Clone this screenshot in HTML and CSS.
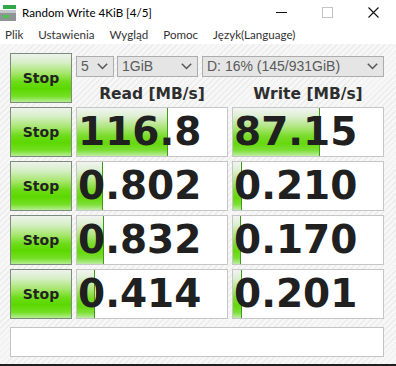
FILE: index.html
```html
<!DOCTYPE html>
<html>
<head>
<meta charset="utf-8">
<link rel="stylesheet" href="styles.css">
</head>
<body>
<div class="window">
  <div class="titlebar">
    <svg class="app-icon" width="17" height="16" viewBox="0 0 17 16">
      <rect x="3" y="0" width="13" height="4" fill="#2fa84a"/>
      <rect x="0" y="5" width="16" height="11" fill="#8f9497"/>
      <rect x="0" y="5" width="16" height="3" fill="#c3c7c9"/>
      <rect x="3" y="10" width="6" height="3" fill="#4fc24f"/>
    </svg>
    <span class="title">Random Write 4KiB [4/5]</span>
    <div class="controls-win">
      <span class="wbtn"><svg width="11" height="11" viewBox="0 0 11 11"><line x1="0" y1="5.5" x2="11" y2="5.5" stroke="#111" stroke-width="1"/></svg></span>
      <span class="wbtn"><svg width="11" height="11" viewBox="0 0 11 11"><rect x="0.5" y="0.5" width="10" height="10" fill="none" stroke="#c4c4c4" stroke-width="1"/></svg></span>
      <span class="wbtn"><svg width="11" height="11" viewBox="0 0 11 11"><path d="M0.5 0.5 L10.5 10.5 M10.5 0.5 L0.5 10.5" stroke="#111" stroke-width="1.1"/></svg></span>
    </div>
  </div>
  <div class="menubar">
    <span>Plik</span><span>Ustawienia</span><span>Wygląd</span><span>Pomoc</span><span>Język(Language)</span>
  </div>
  <div class="main">
    <div class="grid">
      <div class="stop">Stop</div>
      <div class="top-cell">
        <div class="selects">
          <div class="select s-count">5<svg class="chev" width="11" height="7" viewBox="0 0 11 7"><path d="M0.8 0.8 L5.5 5.5 L10.2 0.8" fill="none" stroke="#555" stroke-width="1.5"/></svg></div>
          <div class="select s-size">1GiB<svg class="chev" width="11" height="7" viewBox="0 0 11 7"><path d="M0.8 0.8 L5.5 5.5 L10.2 0.8" fill="none" stroke="#555" stroke-width="1.5"/></svg></div>
          <div class="select s-drive">D: 16% (145/931GiB)<svg class="chev" width="11" height="7" viewBox="0 0 11 7"><path d="M0.8 0.8 L5.5 5.5 L10.2 0.8" fill="none" stroke="#555" stroke-width="1.5"/></svg></div>
        </div>
        <div class="heads">
          <div class="head">Read [MB/s]</div>
          <div class="head">Write [MB/s]</div>
        </div>
      </div>

      <div class="stop">Stop</div>
      <div class="val"><div class="fill" style="width:91px"></div><span class="num">116.8</span></div>
      <div class="val"><div class="fill" style="width:87px"></div><span class="num">87.15</span></div>

      <div class="stop">Stop</div>
      <div class="val"><div class="fill" style="width:26px"></div><span class="num">0.802</span></div>
      <div class="val"><div class="fill" style="width:9px"></div><span class="num">0.210</span></div>

      <div class="stop">Stop</div>
      <div class="val"><div class="fill" style="width:27px"></div><span class="num">0.832</span></div>
      <div class="val"><div class="fill" style="width:8px"></div><span class="num">0.170</span></div>

      <div class="stop">Stop</div>
      <div class="val"><div class="fill" style="width:18px"></div><span class="num">0.414</span></div>
      <div class="val"><div class="fill" style="width:9px"></div><span class="num">0.201</span></div>
    </div>
    <div class="comment"></div>
  </div>
  <div class="taskbar"></div>
</div>
</body>
</html>
```

FILE: styles.css
```css
html, body {
  margin: 0;
  padding: 0;
  background: #fff;
}
.window {
  width: 396px;
  height: 366px;
  overflow: hidden;
  display: flex;
  flex-direction: column;
}
.titlebar {
  height: 24px;
  display: flex;
  align-items: center;
  background: #fff;
  font-family: "Lato", "Liberation Sans", sans-serif;
  font-size: 11.6px;
  color: #000;
}
.app-icon {
  margin-left: 0;
  margin-right: 5px;
  margin-top: 2px;
}
.title {
  margin-top: 1px;
}
.controls-win {
  margin-left: auto;
  display: flex;
  align-items: center;
}
.wbtn {
  width: 46px;
  display: flex;
  justify-content: center;
  align-items: center;
}
.menubar {
  height: 19px;
  display: flex;
  gap: 15px;
  padding-left: 5px;
  padding-top: 1px;
  align-items: center;
  font-family: "Lato", "Liberation Sans", sans-serif;
  font-size: 11.6px;
  color: #333;
  background: #fff;
}
.main {
  flex: 1;
  padding: 9px 12px 0 10px;
  background: repeating-linear-gradient(135deg, #f7f7f7 0px, #f7f7f7 3px, #ececec 3px, #ececec 4.2px);
}
.grid {
  display: grid;
  grid-template-columns: 62px 152px 152px;
  grid-auto-rows: 50px;
  gap: 4px;
}
.stop {
  box-sizing: border-box;
  border: 1px solid #7c8b7c;
  background: linear-gradient(to bottom, #eef2ec 0%, #d6efc6 18%, #a6e66c 40%, #6ddc18 58%, #5cd800 72%, #74df24 88%, #b6ee94 100%);
  font-family: "DejaVu Sans", sans-serif;
  font-weight: bold;
  font-size: 14px;
  color: #232323;
  display: flex;
  align-items: center;
  justify-content: center;
}
.top-cell {
  grid-column: span 2;
  display: flex;
  flex-direction: column;
}
.selects {
  display: flex;
  margin-top: 3px;
  height: 21px;
}
.select {
  box-sizing: border-box;
  height: 21px;
  border: 1px solid #adadad;
  background: #e5e5e5;
  font-family: "Liberation Sans", sans-serif;
  font-size: 14px;
  color: #5a5a5a;
  line-height: 19px;
  padding-left: 4px;
  position: relative;
}
.chev {
  position: absolute;
  right: 5px;
  top: 6px;
}
.s-count { width: 38px; }
.s-size { width: 81px; margin-left: 3px; }
.s-drive { width: 182px; margin-left: 4px; }
.heads {
  display: grid;
  grid-template-columns: 152px 152px;
  gap: 4px;
  margin-top: 8px;
}
.head {
  text-align: center;
  font-family: "DejaVu Sans", sans-serif;
  font-weight: bold;
  font-size: 15.5px;
  line-height: 18px;
  color: #2e2e2e;
}
.val {
  box-sizing: border-box;
  border: 1px solid #c6c6c6;
  background: #fff;
  position: relative;
  overflow: hidden;
}
.fill {
  position: absolute;
  left: 0;
  top: 0;
  bottom: 0;
  box-sizing: border-box;
  border-right: 1px solid #3f9a1a;
  background: linear-gradient(to bottom, #f2f4f1 0%, #dcefd0 18%, #aee57c 40%, #7bdc2c 58%, #66d80e 74%, #7cdf34 88%, #bdeda4 100%);
}
.num {
  position: relative;
  display: block;
  padding-left: 1px;
  font-family: "DejaVu Sans", sans-serif;
  font-weight: bold;
  font-size: 39px;
  line-height: 48px;
  color: #202020;
  white-space: nowrap;
}
.comment {
  box-sizing: border-box;
  margin-top: 8px;
  width: 374px;
  height: 30px;
  border: 1px solid #c4c4c4;
  background: #fff;
}
.taskbar {
  height: 2px;
  background: #1e1e1e;
}
```
